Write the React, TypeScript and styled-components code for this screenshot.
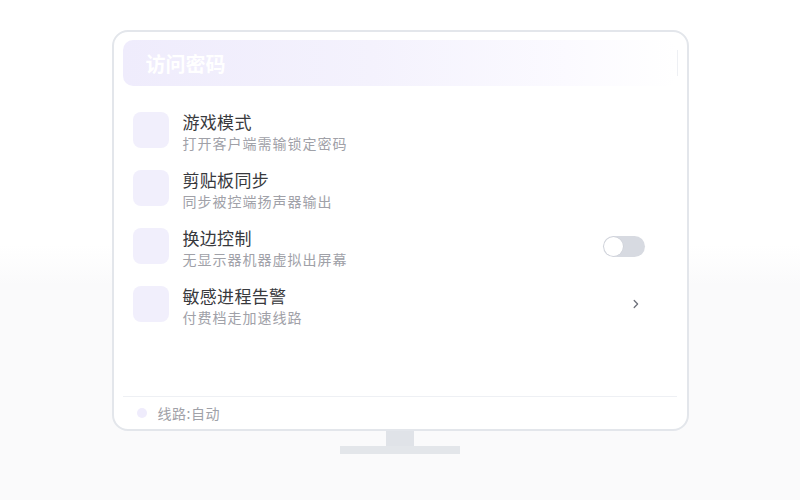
import React from "react";
import styled, { createGlobalStyle } from "styled-components";

const Global = createGlobalStyle`
  html, body { margin: 0; padding: 0; }
  body {
    width: 800px;
    height: 500px;
    overflow: hidden;
    font-family: "Noto Sans CJK SC", "Noto Sans", sans-serif;
    background: linear-gradient(to bottom, #ffffff 0%, #ffffff 49%, #fafafb 57%, #fafafb 100%);
  }
`;

const Page = styled.div`
  width: 800px;
  height: 500px;
  padding-top: 30px;
  box-sizing: border-box;
  display: flex;
  flex-direction: column;
  align-items: center;
`;

const Screen = styled.div`
  width: 577px;
  height: 401px;
  box-sizing: border-box;
  border: 2px solid #e3e6eb;
  border-radius: 16px;
  background: #ffffff;
  padding: 8px 10px 0 9px;
  display: flex;
  flex-direction: column;
`;

const Header = styled.div`
  position: relative;
  height: 46px;
  border-radius: 10px;
  background: linear-gradient(90deg, #efecfc 0%, #f4f2fd 45%, #fbfaff 80%, #ffffff 100%);
  display: flex;
  align-items: center;
  padding-left: 23px;
  color: #ffffff;
  font-size: 20px;
  font-weight: 700;
  &::after {
    content: "";
    position: absolute;
    right: -1px;
    top: 10px;
    bottom: 10px;
    width: 1px;
    background: #eef0f4;
  }
`;

const List = styled.div`
  margin-top: 15px;
  display: flex;
  flex-direction: column;
  flex: 1;
`;

const Row = styled.div`
  height: 58px;
  display: flex;
  align-items: center;
  gap: 14px;
  padding: 0 32px 0 10px;
`;

const IconBox = styled.div`
  width: 36px;
  height: 36px;
  border-radius: 8px;
  background: #f1effc;
  flex-shrink: 0;
`;

const Texts = styled.div`
  flex: 1;
  display: flex;
  flex-direction: column;
  margin-top: 3px;
`;

const Title = styled.div`
  font-size: 17px;
  line-height: 22px;
  color: #38393d;
  letter-spacing: 0.3px;
`;

const Sub = styled.div`
  font-size: 14px;
  line-height: 20px;
  color: #a0a1a8;
  letter-spacing: 1px;
`;

const Toggle = styled.div`
  width: 42px;
  height: 21px;
  border-radius: 11px;
  background: #d7dae1;
  display: flex;
  align-items: center;
  padding: 0 1px;
  box-sizing: border-box;
`;

const Knob = styled.div`
  width: 19px;
  height: 19px;
  border-radius: 50%;
  background: #ffffff;
  box-shadow: 0 0 0 0.5px #c9ccd4;
`;

const Chevron = styled.div`
  margin-right: 6px;
  display: flex;
  align-items: center;
  color: #6e717b;
`;

const Footer = styled.div`
  height: 33px;
  border-top: 1px solid #eef0f4;
  display: flex;
  align-items: center;
  gap: 11px;
  padding-left: 14px;
  box-sizing: border-box;
`;

const Dot = styled.div`
  width: 10px;
  height: 10px;
  border-radius: 50%;
  background: #efecfc;
`;

const FooterText = styled.div`
  font-size: 14px;
  color: #a0a1a8;
  letter-spacing: 0.5px;
`;

const Neck = styled.div`
  width: 28px;
  height: 15px;
  background: #e0e3e8;
`;

const Base = styled.div`
  width: 120px;
  height: 8px;
  background: #e3e6ea;
`;

type Item = { title: string; sub: string; trail?: "toggle" | "chevron" };

const items: Item[] = [
  { title: "游戏模式", sub: "打开客户端需输锁定密码" },
  { title: "剪贴板同步", sub: "同步被控端扬声器输出" },
  { title: "换边控制", sub: "无显示器机器虚拟出屏幕", trail: "toggle" },
  { title: "敏感进程告警", sub: "付费档走加速线路", trail: "chevron" },
];

export default function App() {
  return (
    <>
      <Global />
      <Page>
        <Screen>
          <Header>访问密码</Header>
          <List>
            {items.map((it) => (
              <Row key={it.title}>
                <IconBox />
                <Texts>
                  <Title>{it.title}</Title>
                  <Sub>{it.sub}</Sub>
                </Texts>
                {it.trail === "toggle" && (
                  <Toggle>
                    <Knob />
                  </Toggle>
                )}
                {it.trail === "chevron" && (
                  <Chevron>
                    <svg width="6" height="10" viewBox="0 0 6 10" fill="none">
                      <path d="M1.2 1.5 L4.6 5 L1.2 8.5" stroke="currentColor" strokeWidth="1.3" strokeLinecap="round" strokeLinejoin="round" />
                    </svg>
                  </Chevron>
                )}
              </Row>
            ))}
          </List>
          <Footer>
            <Dot />
            <FooterText>线路:自动</FooterText>
          </Footer>
        </Screen>
        <Neck />
        <Base />
      </Page>
    </>
  );
}
